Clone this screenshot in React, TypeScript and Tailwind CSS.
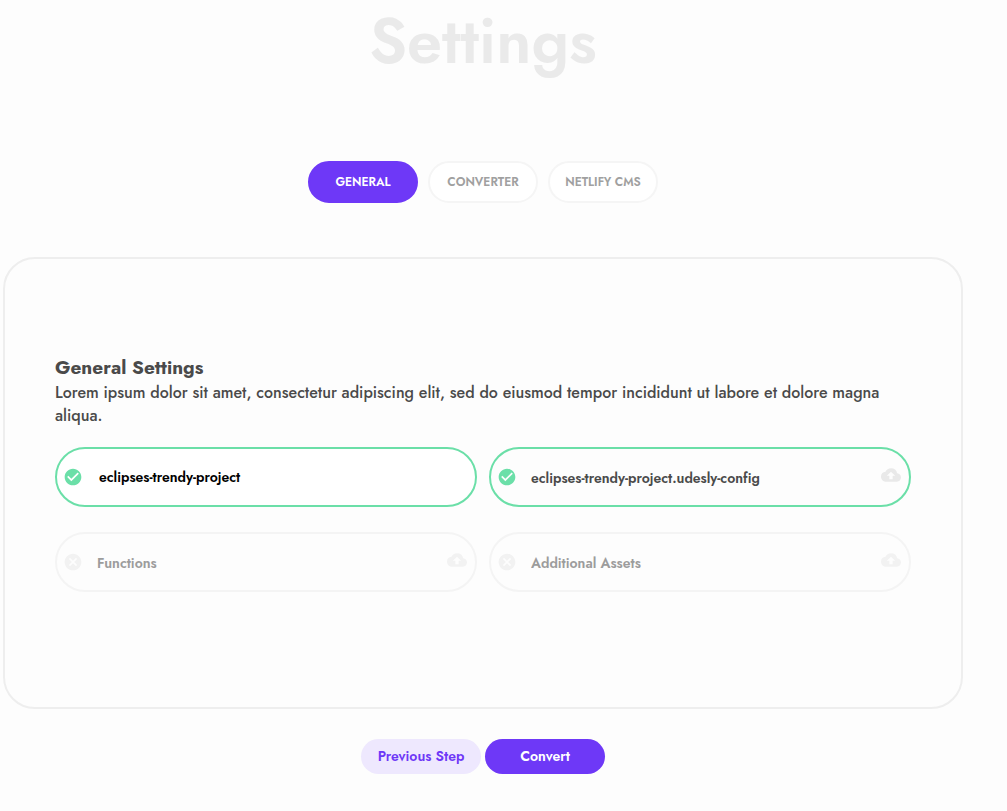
import { useState } from "react";
import { MdCancel, MdCheckCircle, MdCloudUpload } from "react-icons/md";

const tabs = ["General", "Converter", "Netlify CMS"];

function UploadField({ label, fileName }: { label: string; fileName?: string }) {
  const [name, setName] = useState(fileName);
  const filled = Boolean(name);
  return (
    <label
      className={
        "flex h-[60px] cursor-pointer items-center rounded-[30px] border-2 pr-2 pl-1.5 focus-within:outline-2 " +
        (filled ? "border-[#6bdfa8]" : "border-[#f4f4f4]")
      }
    >
      {filled ? (
        <MdCheckCircle className="size-5 shrink-0 text-[#6bdfa8]" aria-hidden />
      ) : (
        <MdCancel className="size-5 shrink-0 text-[#f2f2f2]" aria-hidden />
      )}
      <span
        className={
          "mt-0.5 ml-3.5 flex-1 truncate text-sm leading-6 font-semibold " +
          (filled ? "text-[#4a4a4a]" : "text-[#9c9c9c]")
        }
      >
        {name ?? label}
      </span>
      <MdCloudUpload
        className={"mb-1 size-5 shrink-0 " + (filled ? "text-[#e9e9e9]" : "text-[#f2f2f2]")}
        aria-hidden
      />
      <input
        type="file"
        aria-label={label}
        className="sr-only"
        onChange={(e) => setName(e.target.files?.[0]?.name)}
      />
    </label>
  );
}

export default function App() {
  const [active, setActive] = useState("General");
  const [project, setProject] = useState("eclipses-trendy-project");

  return (
    <div className="min-h-screen bg-[#fdfdfd] pr-11 pb-9 pl-[3px] font-['Jost','Lato',sans-serif] text-[#4a4a4a]">
      <h1 className="pt-0.5 text-center text-[63px] leading-[80px] font-semibold text-[#eaeaea]">Settings</h1>

      <nav className="mt-[79px] flex justify-center gap-2.5">
        {tabs.map((tab) => (
          <button
            key={tab}
            type="button"
            aria-pressed={tab === active}
            onClick={() => setActive(tab)}
            className={
              "h-[42px] w-[110px] cursor-pointer rounded-[21px] border-2 text-xs font-semibold uppercase " +
              (tab === active
                ? "border-[#6e38f7] bg-[#6e38f7] text-white"
                : "border-[#f5f5f5] bg-white text-[#a0a0a0]")
            }
          >
            {tab}
          </button>
        ))}
      </nav>

      <main className="mt-[54px] rounded-[32px] border-2 border-[#eeeeee] px-[50px] pt-[97px] pb-[115px]">
        <h2 className="text-[19px] leading-6 font-bold">General Settings</h2>
        <p className="pt-px text-base leading-[23px] font-medium">
          Lorem ipsum dolor sit amet, consectetur adipiscing elit, sed do eiusmod tempor incididunt ut labore et dolore
          magna aliqua.
        </p>

        <div className="mt-5 grid grid-cols-2 gap-x-3 gap-y-[25px]">
          <label className="flex h-[60px] items-center rounded-[30px] border-2 border-[#6bdfa8] bg-white pr-5 pl-1.5">
            <MdCheckCircle className="size-5 shrink-0 text-[#6bdfa8]" aria-hidden />
            <input
              type="text"
              aria-label="Project name"
              value={project}
              onChange={(e) => setProject(e.target.value)}
              className="ml-4 min-w-0 flex-1 bg-transparent text-sm leading-5 font-semibold text-black outline-none"
            />
          </label>
          <UploadField label="Configuration" fileName="eclipses-trendy-project.udesly-config" />
          <UploadField label="Functions" />
          <UploadField label="Additional Assets" />
        </div>
      </main>

      <div className="mt-[30px] flex justify-center gap-1">
        <button
          type="button"
          className="h-[35px] w-[120px] cursor-pointer rounded-[18px] bg-[#eee8fe] pb-0.5 text-sm font-semibold text-[#6e38f7]"
        >
          Previous Step
        </button>
        <button
          type="button"
          className="h-[35px] w-[120px] cursor-pointer rounded-[18px] bg-[#6e38f7] pb-0.5 text-sm font-semibold text-white"
        >
          Convert
        </button>
      </div>
    </div>
  );
}
